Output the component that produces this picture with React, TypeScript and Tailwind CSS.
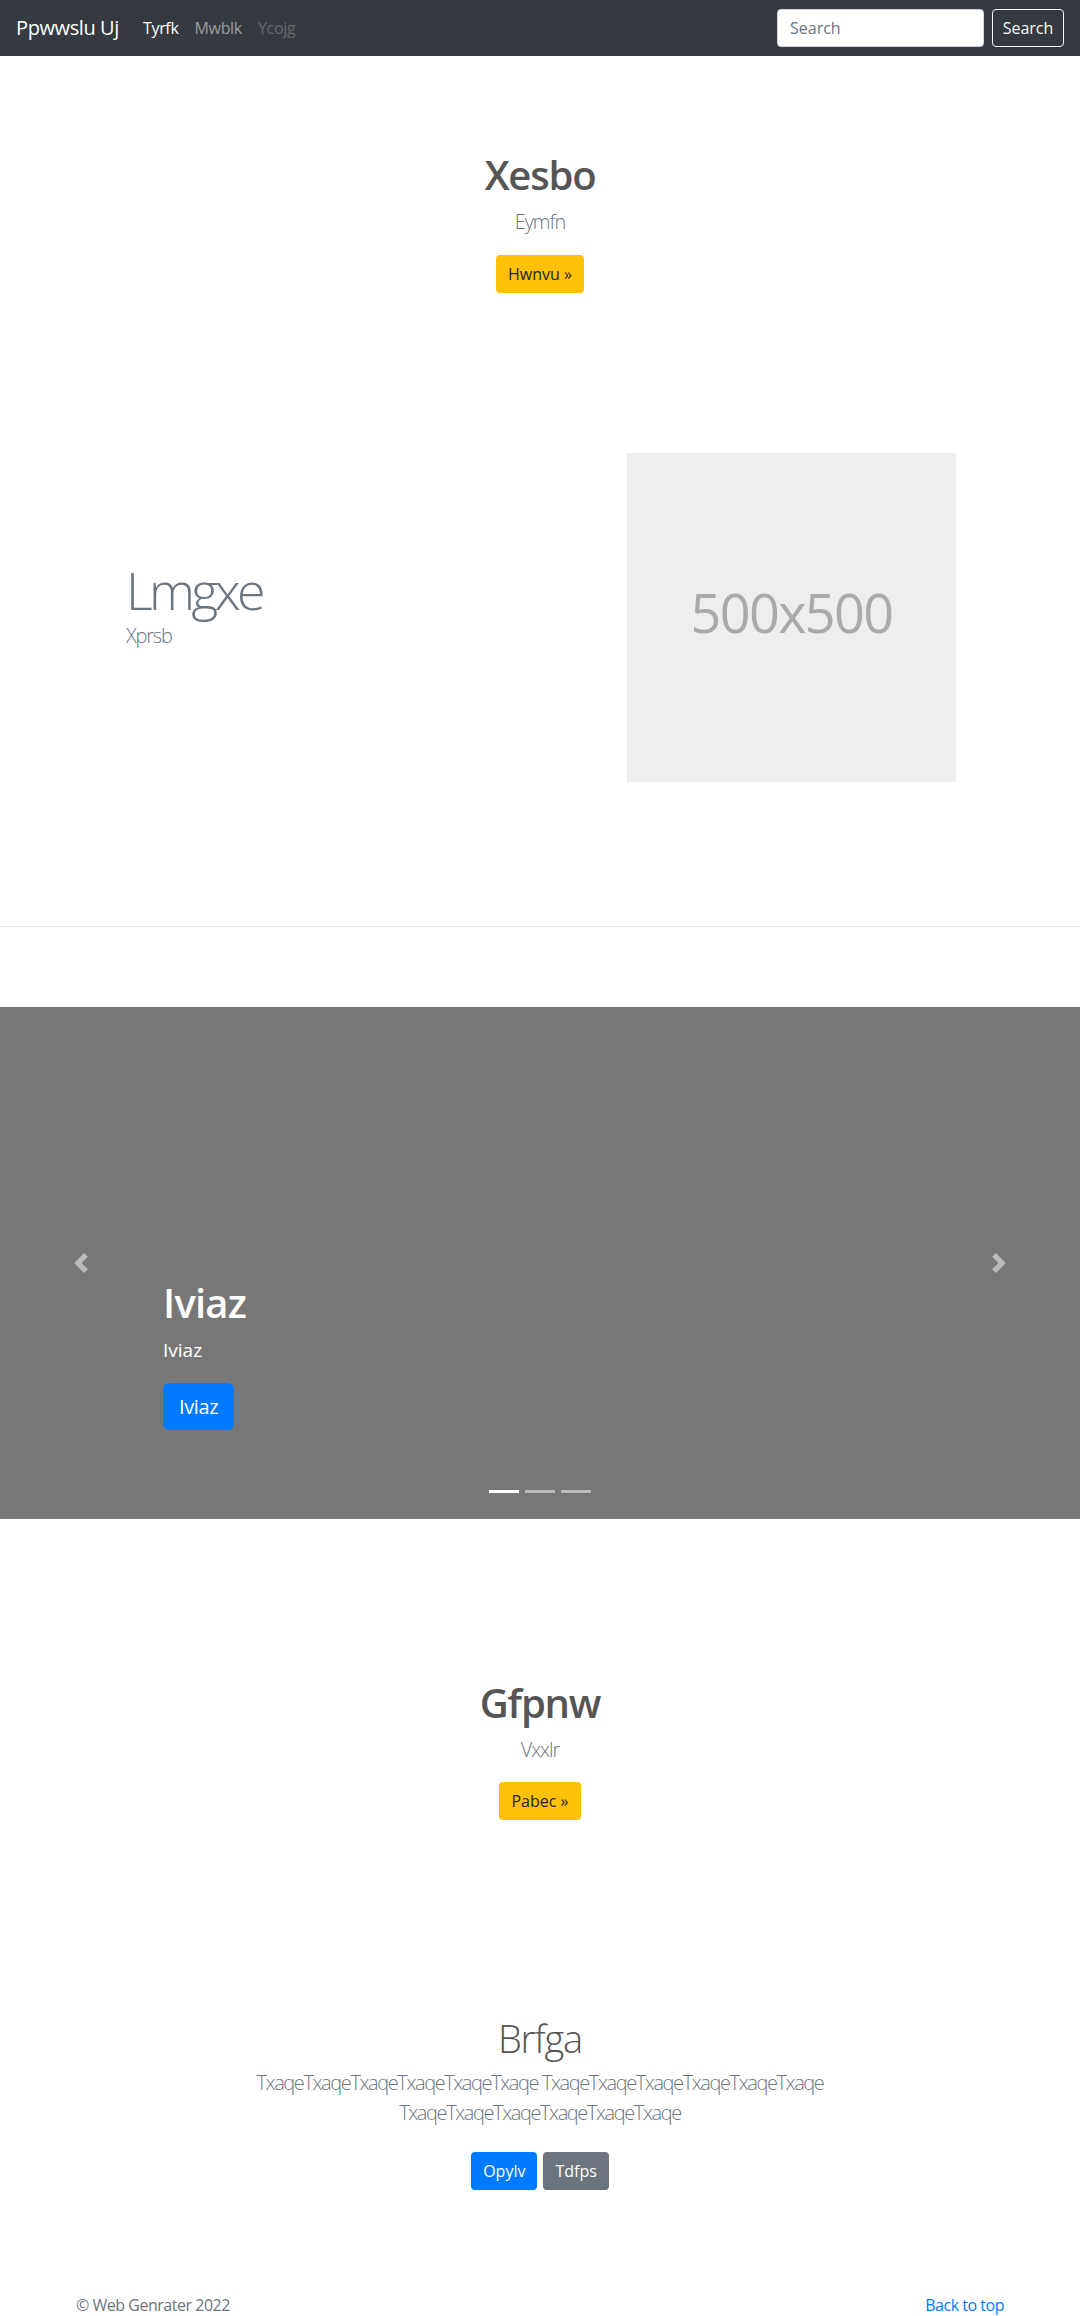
import React from 'react';

function Chevron({ dir }: { dir: 'left' | 'right' }) {
  const d =
    dir === 'left'
      ? 'M5.25 0l-4 4 4 4 1.5-1.5L4.25 4l2.5-2.5L5.25 0z'
      : 'M2.75 0l-1.5 1.5L3.75 4l-2.5 2.5L2.75 8l4-4-4-4z';
  return (
    <svg viewBox="0 0 8 8" width={20} height={20} fill="#ffffff" opacity={0.5}>
      <path d={d} />
    </svg>
  );
}

function Navbar() {
  return (
    <nav className="flex h-14 items-center bg-[#343a40] px-4">
      <span className="mr-4 text-[20px] leading-[30px] tracking-[-0.02em] text-white">Ppwwslu Uj</span>
      <div className="flex text-[16px] tracking-[-0.02em]">
        <span className="px-2 text-white">Tyrfk</span>
        <span className="px-2 text-white/50">Mwblk</span>
        <span className="px-2 text-white/25">Ycojg</span>
      </div>
      <div className="ml-auto flex items-center gap-2">
        <input
          placeholder="Search"
          className="h-[38px] w-[207px] rounded border border-[#ced4da] bg-white px-3 text-[16px] text-[#495057] outline-none placeholder:text-[#6c757d]"
        />
        <button className="h-[38px] w-[72px] rounded border border-[#f8f9fa] text-[16px] text-[#f8f9fa]">
          Search
        </button>
      </div>
    </nav>
  );
}

function Hero({
  title,
  lead,
  action,
  actionGap,
}: {
  title: string;
  lead: string;
  action: string;
  actionGap: string;
}) {
  return (
    <div className="flex flex-col items-center text-center">
      <h1 className="text-[40px] font-semibold leading-[48px] tracking-[-0.03em] text-[#555555]">{title}</h1>
      <p className="mt-2 text-[20px] font-light leading-[30px] tracking-[-0.05em] text-[#6c757d]">{lead}</p>
      <button className={`${actionGap} h-[38px] rounded bg-[#ffc107] px-3 text-[16px] text-[#212529]`}>
        {action} &raquo;
      </button>
    </div>
  );
}

function Carousel() {
  return (
    <div className="relative flex h-[512px] flex-col justify-end bg-[#777777] pb-[89px] pl-[163px]">
      <h1 className="text-[40px] font-semibold leading-[48px] tracking-[-0.02em] text-white">Iviaz</h1>
      <p className="mt-2 text-[19px] font-medium leading-[30px] text-white">Iviaz</p>
      <div className="mt-[18px]">
        <button className="h-[47px] rounded-md bg-[#007bff] px-4 text-[20px] tracking-[-0.02em] text-white">
          Iviaz
        </button>
      </div>

      <div className="absolute bottom-0 left-0 top-0 flex w-[15%] items-center justify-center">
        <Chevron dir="left" />
      </div>
      <div className="absolute bottom-0 right-0 top-0 flex w-[15%] items-center justify-center">
        <Chevron dir="right" />
      </div>

      <div className="absolute bottom-[26px] left-0 right-0 flex justify-center gap-[6px]">
        <span className="h-[3px] w-[30px] bg-white" />
        <span className="h-[3px] w-[30px] bg-white/50" />
        <span className="h-[3px] w-[30px] bg-white/50" />
      </div>
    </div>
  );
}

export default function App() {
  const group = 'TxaqeTxaqeTxaqeTxaqeTxaqeTxaqe';

  return (
    <div className="min-h-screen bg-white font-['Open_Sans','Noto_Sans',sans-serif]">
      <Navbar />

      <div className="pt-[95px]">
        <Hero title="Xesbo" lead="Eymfn" action="Hwnvu" actionGap="mt-[18px]" />
      </div>

      <div className="mt-[160px] flex items-center">
        <div className="w-1/2 pb-[26px] pl-[126px]">
          <h2 className="text-[52px] font-light leading-[62px] tracking-[-0.07em] text-[#6c757d]">Lmgxe</h2>
          <p className="text-[20px] font-light leading-[30px] tracking-[-0.06em] text-[#6c757d]">Xprsb</p>
        </div>
        <div className="w-1/2 pl-[87px]">
          <div className="flex h-[329px] w-[329px] items-center justify-center bg-[#eeeeee] pb-[10px] text-[54px] tracking-[-0.03em] text-[#aaaaaa]">
            500x500
          </div>
        </div>
      </div>

      <hr className="mt-[144px] border-t border-[#e5e5e5]" />

      <div className="mt-[80px]">
        <Carousel />
      </div>

      <div className="pt-[160px]">
        <Hero title="Gfpnw" lead="Vxxlr" action="Pabec" actionGap="mt-[17px]" />
      </div>

      <div className="mt-[194px] flex flex-col items-center text-center">
        <h1 className="text-[38px] font-light leading-[48px] tracking-[-0.03em] text-[#555555]">Brfga</h1>
        <p className="mt-[6px] max-w-[620px] text-[20px] font-light leading-[30px] tracking-[-0.07em] text-[#6c757d]">
          {group} {group} {group}
        </p>
        <div className="mt-6 flex gap-[6px]">
          <button className="h-[38px] rounded bg-[#007bff] px-3 text-[16px] text-white">Opylv</button>
          <button className="h-[38px] rounded bg-[#6c757d] px-3 text-[16px] text-white">Tdfps</button>
        </div>
      </div>

      <footer className="mt-[103px] flex justify-between px-[76px] pb-12 text-[16px] leading-6 tracking-[-0.03em]">
        <span className="text-[#6c757d]">&copy; Web Genrater 2022</span>
        <span className="text-[#007bff]">Back to top</span>
      </footer>
    </div>
  );
}
